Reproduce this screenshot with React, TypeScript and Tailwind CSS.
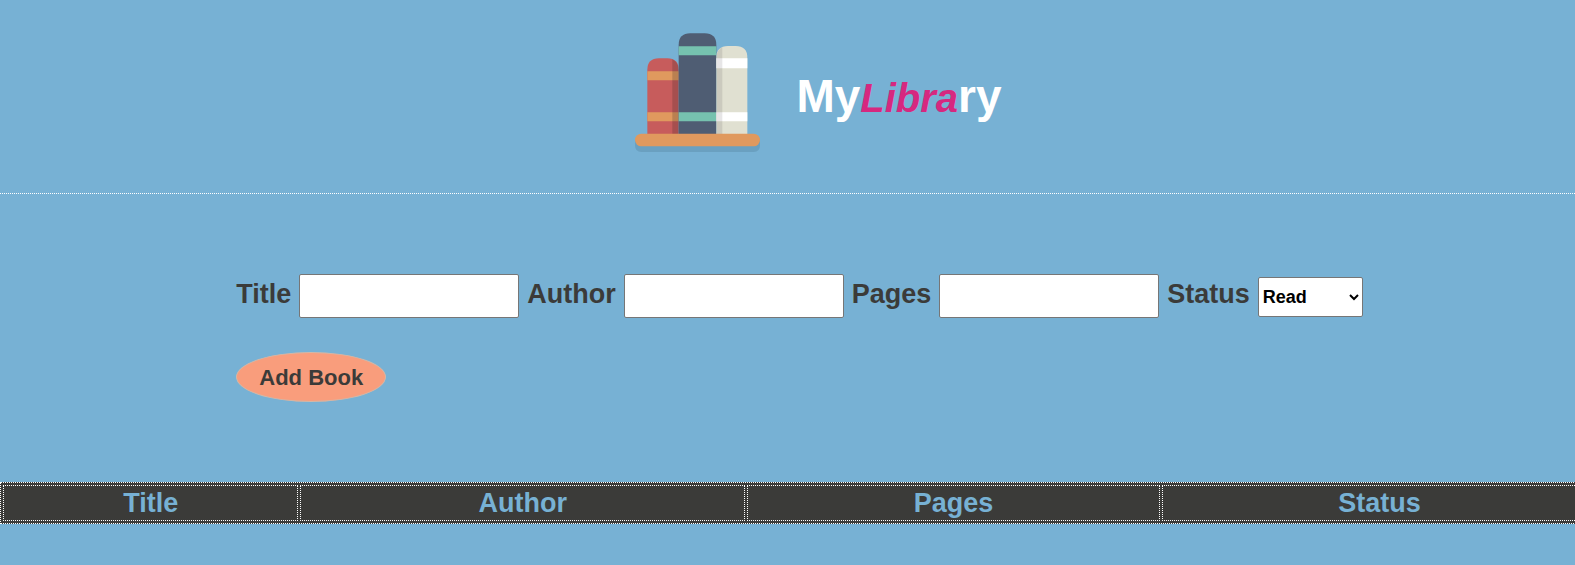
import { useState } from "react";
import type { FormEvent } from "react";

type Book = { title: string; author: string; pages: string; status: string };

function BooksLogo() {
  return (
    <svg className="h-[120px] w-[125px]" viewBox="0 0 375 360" aria-hidden="true">
      <path d="M0 319H375V336Q375 357 356 357H19Q0 357 0 336Z" fill="#6aa0c0" />
      <path d="M37 303V111Q37 76 72 76H97Q131 76 131 111V303Z" fill="#c75c5c" />
      <path d="M37 115H131V142H37ZM37 238H131V265H37Z" fill="#e0995e" />
      <path d="M112 79Q131 87 131 111V303H112Z" fill="#231f20" fillOpacity=".2" />
      <path d="M131 303V36Q131 1 166 1H209Q244 1 244 36V303Z" fill="#4f5d73" />
      <path d="M131 40H244V67H131ZM131 238H244V265H131Z" fill="#76c2af" />
      <path d="M244 303V74Q244 39 279 39H302Q337 39 337 74V303Z" fill="#e0e0d1" />
      <path d="M244 76H337V106H244ZM244 238H337V265H244Z" fill="#fff" />
      <path d="M244 303V74Q245 51 262 43V303Z" fill="#231f20" fillOpacity=".11" />
      <rect y="302" width="375" height="38" rx="19" fill="#e0995e" />
    </svg>
  );
}

const labelClass = "text-[27px] leading-9";
const inputClass =
  "h-11 w-[220px] rounded-[2px] border border-[#767676] bg-white px-1 text-[20px] text-black";
const cellClass = "border border-dotted border-white p-0";

export default function App() {
  const [books, setBooks] = useState<Book[]>([]);

  const addBook = (event: FormEvent<HTMLFormElement>) => {
    event.preventDefault();
    const data = new FormData(event.currentTarget);
    const read = (name: string) => String(data.get(name) ?? "");
    setBooks([
      ...books,
      { title: read("title"), author: read("author"), pages: read("pages"), status: read("status") },
    ]);
    event.currentTarget.reset();
  };

  return (
    <div className="min-h-screen overflow-x-hidden bg-[#77b1d4] font-['Liberation_Sans',Arial,sans-serif] font-bold text-[#3b3b39]">
      <header className="flex items-start justify-center gap-9 border-b border-dotted border-white pt-[33px] pb-10 pl-[62px]">
        <BooksLogo />
        <h1 className="pt-9 text-[46px] leading-[54px] font-black text-white">
          My<em className="text-[40px] text-[#d6287f]">Libra</em>ry
        </h1>
      </header>

      <form onSubmit={addBook} className="flex flex-col items-start gap-[34px] py-20 pl-[15%]">
        <div className="flex flex-wrap items-baseline gap-2">
          <label htmlFor="title" className={labelClass}>Title</label>
          <input id="title" name="title" type="text" className={inputClass} />
          <label htmlFor="author" className={labelClass}>Author</label>
          <input id="author" name="author" type="text" className={inputClass} />
          <label htmlFor="pages" className={labelClass}>Pages</label>
          <input id="pages" name="pages" type="text" className={inputClass} />
          <label htmlFor="status" className={labelClass}>Status</label>
          <select
            id="status"
            name="status"
            className="h-10 w-[105px] rounded-[2px] border border-[#767676] bg-white text-[18px] text-black"
          >
            <option>Read</option>
            <option>Not Read</option>
          </select>
        </div>
        <button
          type="submit"
          className="h-[50px] w-[150px] rounded-[50%] border border-[#d3b8a8] bg-[#f99d7c] text-[22px]"
        >
          Add Book
        </button>
      </form>

      <table className="w-[calc(100%+25px)] table-fixed border-separate border-spacing-[2px] border border-dotted border-white bg-[#3b3b39] text-center text-[27px] leading-[34px] text-[#77b1d4]">
        <thead>
          <tr>
            <th className={`${cellClass} w-[18.6%]`}>Title</th>
            <th className={`${cellClass} w-[28%]`}>Author</th>
            <th className={`${cellClass} w-[26%]`}>Pages</th>
            <th className={cellClass}>Status</th>
          </tr>
        </thead>
        <tbody>
          {books.map((book, index) => (
            <tr key={index}>
              <td className={cellClass}>{book.title}</td>
              <td className={cellClass}>{book.author}</td>
              <td className={cellClass}>{book.pages}</td>
              <td className={cellClass}>{book.status}</td>
            </tr>
          ))}
        </tbody>
      </table>
    </div>
  );
}
